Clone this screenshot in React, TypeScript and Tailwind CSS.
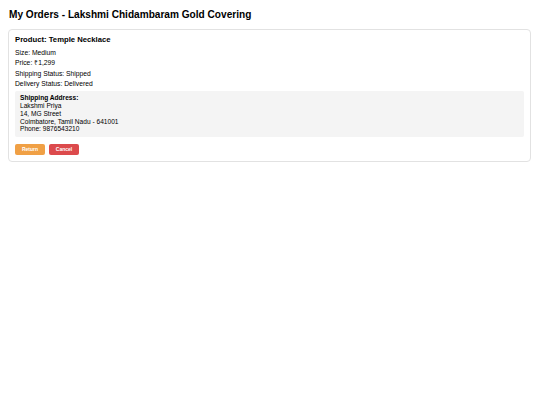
export default function App() {
  return (
    <div className="min-h-[405px] bg-white px-[8px] pt-[8px] text-black" style={{ fontFamily: '"Liberation Sans", Arial, sans-serif' }}>
      <h1 className="ml-[1px] text-[10.1px] font-bold leading-[13px]">My Orders - Lakshmi Chidambaram Gold Covering</h1>
      <div className="mt-[8px] w-[523px] rounded-[4px] border border-[#e2e2e2] px-[6px] pb-[6px] pt-[5px]">
        <div className="text-[7.7px] font-bold leading-[10px]">Product: Temple Necklace</div>
        <div className="mt-[3px] text-[6.75px] leading-[10.3px]">
          <div>Size: Medium</div>
          <div>Price: ₹1,299</div>
          <div>Shipping Status: Shipped</div>
          <div>Delivery Status: Delivered</div>
        </div>
        <div className="mt-[2px] rounded-[2px] bg-[#f4f4f4] px-[5px] pb-[4px] pt-[3px] text-[6.6px] leading-[7.8px]">
          <div className="font-bold">Shipping Address:</div>
          <div>Lakshmi Priya</div>
          <div>14, MG Street</div>
          <div>Coimbatore, Tamil Nadu - 641001</div>
          <div>Phone: 9876543210</div>
        </div>
        <div className="mt-[7px] flex gap-[4px]">
          <button className="flex h-[11px] w-[30px] items-center justify-center rounded-[2px] bg-[#f0a045] text-[5px] font-bold text-white">Return</button>
          <button className="flex h-[11px] w-[30px] items-center justify-center rounded-[2px] bg-[#dc4a4c] text-[5px] font-bold text-white">Cancel</button>
        </div>
      </div>
    </div>
  );
}
